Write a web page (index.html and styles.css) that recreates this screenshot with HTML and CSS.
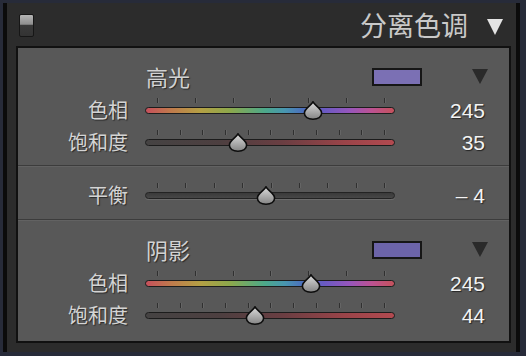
FILE: index.html
```html
<!DOCTYPE html>
<html lang="zh">
<head>
<meta charset="utf-8">
<title>分离色调</title>
<link rel="stylesheet" href="styles.css">
</head>
<body>
<div class="window">
  <div class="header">
    <span class="toggle"></span>
    <span class="title">分离色调</span>
    <span class="collapse"></span>
  </div>
  <div class="panel">
    <section class="group">
      <div class="head">
        <span class="head-label">高光</span>
        <span class="swatch swatch-hi"></span>
        <span class="drop"></span>
      </div>
      <div class="row">
        <span class="label">色相</span>
        <div class="slider">
          <div class="ticks"><i></i><i></i><i></i><i></i><i></i><i></i><i></i></div>
          <div class="track track-hue"><svg class="thumb" style="left:157px" viewBox="0 0 20 19" width="20" height="19"><defs><linearGradient id="tg1" x1="0" y1="0" x2="0" y2="1"><stop offset="0" stop-color="#dcdcdc"/><stop offset="1" stop-color="#848484"/></linearGradient></defs><path d="M10 0.9 C11.6 4.2 18.6 7.4 18.6 12 C18.6 15.9 14.8 18.2 10 18.2 C5.2 18.2 1.4 15.9 1.4 12 C1.4 7.4 8.4 4.2 10 0.9 Z" fill="url(#tg1)" stroke="#0d0d0d" stroke-width="1.6"/></svg></div>
        </div>
        <span class="value">245</span>
      </div>
      <div class="row">
        <span class="label">饱和度</span>
        <div class="slider">
          <div class="ticks"><i></i><i></i><i></i><i></i><i></i><i></i><i></i><i></i><i></i><i></i><i></i></div>
          <div class="track track-sat"><svg class="thumb" style="left:82px" viewBox="0 0 20 19" width="20" height="19"><path d="M10 0.9 C11.6 4.2 18.6 7.4 18.6 12 C18.6 15.9 14.8 18.2 10 18.2 C5.2 18.2 1.4 15.9 1.4 12 C1.4 7.4 8.4 4.2 10 0.9 Z" fill="url(#tg1)" stroke="#0d0d0d" stroke-width="1.6"/></svg></div>
        </div>
        <span class="value">35</span>
      </div>
    </section>
    <div class="divider"></div>
    <section class="group group-balance">
      <div class="row">
        <span class="label">平衡</span>
        <div class="slider">
          <div class="ticks"><i></i><i></i><i></i><i></i><i></i><i></i><i></i><i></i><i></i></div>
          <div class="track track-bal"><svg class="thumb" style="left:110px" viewBox="0 0 20 19" width="20" height="19"><path d="M10 0.9 C11.6 4.2 18.6 7.4 18.6 12 C18.6 15.9 14.8 18.2 10 18.2 C5.2 18.2 1.4 15.9 1.4 12 C1.4 7.4 8.4 4.2 10 0.9 Z" fill="url(#tg1)" stroke="#0d0d0d" stroke-width="1.6"/></svg></div>
        </div>
        <span class="value">– 4</span>
      </div>
    </section>
    <div class="divider"></div>
    <section class="group group-last">
      <div class="head">
        <span class="head-label">阴影</span>
        <span class="swatch swatch-sh"></span>
        <span class="drop"></span>
      </div>
      <div class="row">
        <span class="label">色相</span>
        <div class="slider">
          <div class="ticks"><i></i><i></i><i></i><i></i><i></i><i></i><i></i></div>
          <div class="track track-hue"><svg class="thumb" style="left:155px" viewBox="0 0 20 19" width="20" height="19"><path d="M10 0.9 C11.6 4.2 18.6 7.4 18.6 12 C18.6 15.9 14.8 18.2 10 18.2 C5.2 18.2 1.4 15.9 1.4 12 C1.4 7.4 8.4 4.2 10 0.9 Z" fill="url(#tg1)" stroke="#0d0d0d" stroke-width="1.6"/></svg></div>
        </div>
        <span class="value">245</span>
      </div>
      <div class="row">
        <span class="label">饱和度</span>
        <div class="slider">
          <div class="ticks"><i></i><i></i><i></i><i></i><i></i><i></i><i></i><i></i><i></i><i></i><i></i></div>
          <div class="track track-sat"><svg class="thumb" style="left:99px" viewBox="0 0 20 19" width="20" height="19"><path d="M10 0.9 C11.6 4.2 18.6 7.4 18.6 12 C18.6 15.9 14.8 18.2 10 18.2 C5.2 18.2 1.4 15.9 1.4 12 C1.4 7.4 8.4 4.2 10 0.9 Z" fill="url(#tg1)" stroke="#0d0d0d" stroke-width="1.6"/></svg></div>
        </div>
        <span class="value">44</span>
      </div>
    </section>
  </div>
</div>
</body>
</html>
```
FILE: styles.css
```css
* { box-sizing: border-box; }
html, body { margin: 0; padding: 0; }
body {
  width: 526px;
  height: 356px;
  overflow: hidden;
  background: #272b39;
  font-family: "Noto Sans CJK SC", "Noto Sans", sans-serif;
}
.window {
  margin: 3px 6px 4px 3px;
  height: 349px;
  border-left: 4px solid #0b0b0b;
  border-right: 4px solid #0b0b0b;
  background: #2c2c2c;
  padding: 0 5px 9px 9px;
  display: flex;
  flex-direction: column;
}
.header {
  height: 43px;
  display: flex;
  align-items: center;
}
.toggle {
  width: 15px;
  height: 23px;
  margin-left: 3px;
  margin-top: 1px;
  border: 1px solid #161616;
  border-radius: 2px;
  background: linear-gradient(to bottom, #b4b4b4 0%, #8e8e8e 45%, #3a3a3a 46%, #333 100%);
}
.title {
  margin-left: auto;
  font-size: 27px;
  line-height: 1;
  color: #c9c9c9;
  letter-spacing: 0;
}
.collapse {
  width: 0;
  height: 0;
  margin-left: 19px;
  margin-right: 8px;
  margin-top: 5px;
  border-left: 8.5px solid transparent;
  border-right: 8.5px solid transparent;
  border-top: 16px solid #e4e4e4;
}
.panel {
  flex: 1;
  border: 2px solid #111;
  background: #585858;
  display: flex;
  flex-direction: column;
}
.group {
  padding: 14px 0 7px;
}
.group-balance { padding: 12px 0 8px; }
.group-last { padding: 14px 0 10px; }
.divider {
  height: 2px;
  border-top: 1px solid #3c3c3c;
  border-bottom: 1px solid #626262;
}
.head {
  height: 28px;
  margin-bottom: 4px;
  display: flex;
  align-items: center;
  padding-left: 128px;
}
.head-label {
  font-size: 22px;
  line-height: 1;
  color: #d2d2d2;
  text-shadow: 1px 1px 1px rgba(0,0,0,0.55);
}
.swatch {
  margin-left: auto;
  width: 50px;
  height: 18px;
  margin-top: 2px;
  border: 2px solid #161616;
}
.swatch-hi { background: #7b70b4; }
.swatch-sh { background: #6c64a9; }
.drop {
  width: 0;
  height: 0;
  margin-left: 50px;
  margin-right: 21px;
  border-left: 8px solid transparent;
  border-right: 8px solid transparent;
  border-top: 15px solid #2a2a2a;
}
.row {
  height: 32px;
  display: grid;
  grid-template-columns: 110px 250px 73px;
  column-gap: 17px;
  align-items: center;
}
.label {
  text-align: right;
  font-size: 20px;
  line-height: 1;
  color: #d4d4d4;
  text-shadow: 1px 1px 1px rgba(0,0,0,0.55);
}
.value {
  text-align: right;
  font-family: "Liberation Sans", Arial, sans-serif;
  font-size: 21px;
  line-height: 1;
  color: #f3f3f3;
  text-shadow: 1px 1px 1px rgba(0,0,0,0.6);
  white-space: pre;
}
.slider {
  align-self: start;
  padding-top: 4px;
  display: flex;
  flex-direction: column;
  gap: 4px;
}
.ticks {
  height: 5px;
  width: 228px;
  margin-left: 12px;
  display: flex;
  justify-content: space-between;
}
.ticks i {
  display: block;
  width: 1px;
  height: 5px;
  background: #303030;
  box-shadow: 1px 0 0 rgba(255,255,255,0.08);
}
.track {
  position: relative;
  height: 7px;
  border-radius: 4px;
  border: 1px solid #1c1c1c;
}
.track-hue {
  background: linear-gradient(to right, #c6505c 0%, #c07a4c 10%, #b4a044 22%, #8ca84c 34%, #4ca88a 48%, #4896b0 56%, #4c70bc 63%, #6a5ac2 72%, #9656bc 82%, #bc5292 91%, #c4525c 100%);
}
.track-sat {
  background: linear-gradient(to right, #454343 0%, #4d3f40 30%, #6a3e42 55%, #9a4449 80%, #b24a50 100%);
}
.track-bal {
  background: linear-gradient(to bottom, #3a3a3a, #474747);
  border-color: #232323;
  box-shadow: 0 1px 0 rgba(255,255,255,0.12);
}
.thumb {
  position: absolute;
  top: -7px;
  display: block;
}
```
